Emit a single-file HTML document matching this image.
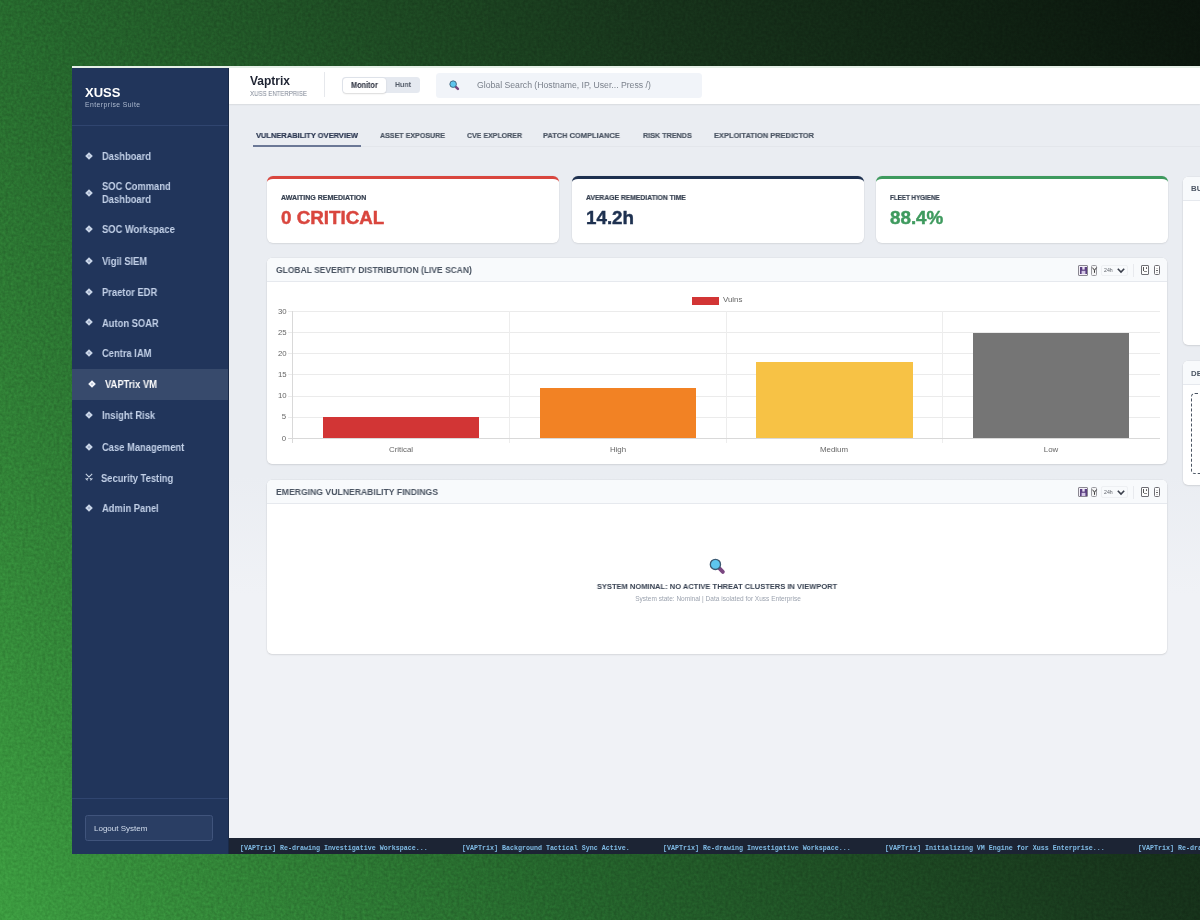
<!DOCTYPE html>
<html><head><meta charset="utf-8"><style>
*{box-sizing:border-box;margin:0;padding:0}
html,body{width:1200px;height:920px;overflow:hidden}
body{position:relative;font-family:"Liberation Sans",sans-serif;
 background:linear-gradient(60deg,#3c9c40 0%,#25662c 33%,#17341b 67%,#0a140c 100%);}
.t{position:absolute;line-height:1;white-space:nowrap;will-change:transform}
.r{position:absolute}
svg{position:absolute;overflow:visible}
</style></head><body>
<svg style="left:0;top:0" width="1200" height="920"><filter id="nz" x="0" y="0" width="100%" height="100%" color-interpolation-filters="sRGB"><feTurbulence type="fractalNoise" baseFrequency="0.35" numOctaves="2" seed="3"/><feColorMatrix values="1 0 0 0 -0.025  1 0 0 0 -0.025  1 0 0 0 -0.025  0 0 0 0 1"/></filter><rect width="1200" height="920" filter="url(#nz)" style="mix-blend-mode:overlay;opacity:.17"/></svg>
<div class="r" style="left:72.00px;top:66.00px;width:1128.00px;height:788.00px;background:linear-gradient(180deg,#eaedf2 0%,#eaedf2 52%,#f0f2f6 67%,#f0f2f6 100%)"></div>
<div class="r" style="left:72.00px;top:66.00px;width:157.00px;height:788.00px;background:#21355b"></div>
<div class="r" style="left:228.30px;top:66.00px;width:0.70px;height:788.00px;background:#1a2a48"></div>
<div class="r" style="left:72.00px;top:66.00px;width:1128.00px;height:1.50px;background:#e6f0e8"></div>
<div class="t " style="left:84.70px;top:85.90px;font-size:13px;color:#ffffff;font-weight:bold;">XUSS</div>
<div class="t " style="left:85.00px;top:102.14px;font-size:6.8px;color:#aebbd0;letter-spacing:.45px">Enterprise Suite</div>
<div class="r" style="left:72.00px;top:125.00px;width:156.30px;height:1.00px;background:#30456f"></div>
<div class="r" style="left:72.00px;top:368.90px;width:156.30px;height:30.90px;background:#374a6c"></div>
<div class="t nav" style="left:102.30px;top:152.07px;font-size:10.2px;color:#c3d1e8;font-weight:bold;transform:scaleX(0.92);transform-origin:0 0;">Dashboard</div>
<svg style="left:85.30px;top:151.80px" width="8" height="8" viewBox="0 0 8 8"><path d="M4 0.2L7.8 4L4 7.8L0.2 4Z" fill="#c9d5e8"/><path d="M4 3L5 4L4 5L3 4Z" fill="#7d8cab"/></svg>
<div class="t nav" style="left:102.30px;top:181.97px;font-size:10.2px;color:#c3d1e8;font-weight:bold;transform:scaleX(0.92);transform-origin:0 0;">SOC Command</div>
<div class="t nav" style="left:102.30px;top:194.97px;font-size:10.2px;color:#c3d1e8;font-weight:bold;transform:scaleX(0.92);transform-origin:0 0;">Dashboard</div>
<svg style="left:85.30px;top:188.70px" width="8" height="8" viewBox="0 0 8 8"><path d="M4 0.2L7.8 4L4 7.8L0.2 4Z" fill="#c9d5e8"/><path d="M4 3L5 4L4 5L3 4Z" fill="#7d8cab"/></svg>
<div class="t nav" style="left:102.30px;top:225.17px;font-size:10.2px;color:#c3d1e8;font-weight:bold;transform:scaleX(0.92);transform-origin:0 0;">SOC Workspace</div>
<svg style="left:85.30px;top:224.90px" width="8" height="8" viewBox="0 0 8 8"><path d="M4 0.2L7.8 4L4 7.8L0.2 4Z" fill="#c9d5e8"/><path d="M4 3L5 4L4 5L3 4Z" fill="#7d8cab"/></svg>
<div class="t nav" style="left:102.30px;top:256.77px;font-size:10.2px;color:#c3d1e8;font-weight:bold;transform:scaleX(0.92);transform-origin:0 0;">Vigil SIEM</div>
<svg style="left:85.30px;top:256.50px" width="8" height="8" viewBox="0 0 8 8"><path d="M4 0.2L7.8 4L4 7.8L0.2 4Z" fill="#c9d5e8"/><path d="M4 3L5 4L4 5L3 4Z" fill="#7d8cab"/></svg>
<div class="t nav" style="left:102.30px;top:288.07px;font-size:10.2px;color:#c3d1e8;font-weight:bold;transform:scaleX(0.92);transform-origin:0 0;">Praetor EDR</div>
<svg style="left:85.30px;top:287.80px" width="8" height="8" viewBox="0 0 8 8"><path d="M4 0.2L7.8 4L4 7.8L0.2 4Z" fill="#c9d5e8"/><path d="M4 3L5 4L4 5L3 4Z" fill="#7d8cab"/></svg>
<div class="t nav" style="left:102.30px;top:318.67px;font-size:10.2px;color:#c3d1e8;font-weight:bold;transform:scaleX(0.92);transform-origin:0 0;">Auton SOAR</div>
<svg style="left:85.30px;top:318.40px" width="8" height="8" viewBox="0 0 8 8"><path d="M4 0.2L7.8 4L4 7.8L0.2 4Z" fill="#c9d5e8"/><path d="M4 3L5 4L4 5L3 4Z" fill="#7d8cab"/></svg>
<div class="t nav" style="left:102.30px;top:349.37px;font-size:10.2px;color:#c3d1e8;font-weight:bold;transform:scaleX(0.92);transform-origin:0 0;">Centra IAM</div>
<svg style="left:85.30px;top:349.10px" width="8" height="8" viewBox="0 0 8 8"><path d="M4 0.2L7.8 4L4 7.8L0.2 4Z" fill="#c9d5e8"/><path d="M4 3L5 4L4 5L3 4Z" fill="#7d8cab"/></svg>
<div class="t nav" style="left:104.80px;top:380.47px;font-size:10.2px;color:#ffffff;font-weight:bold;transform:scaleX(0.92);transform-origin:0 0;">VAPTrix VM</div>
<svg style="left:88.00px;top:380.20px" width="8" height="8" viewBox="0 0 8 8"><path d="M4 0.2L7.8 4L4 7.8L0.2 4Z" fill="#f2f5fa"/><path d="M4 3L5 4L4 5L3 4Z" fill="#9aa8c2"/></svg>
<div class="t nav" style="left:102.30px;top:411.47px;font-size:10.2px;color:#c3d1e8;font-weight:bold;transform:scaleX(0.92);transform-origin:0 0;">Insight Risk</div>
<svg style="left:85.30px;top:411.20px" width="8" height="8" viewBox="0 0 8 8"><path d="M4 0.2L7.8 4L4 7.8L0.2 4Z" fill="#c9d5e8"/><path d="M4 3L5 4L4 5L3 4Z" fill="#7d8cab"/></svg>
<div class="t nav" style="left:102.30px;top:443.17px;font-size:10.2px;color:#c3d1e8;font-weight:bold;transform:scaleX(0.92);transform-origin:0 0;">Case Management</div>
<svg style="left:85.30px;top:442.90px" width="8" height="8" viewBox="0 0 8 8"><path d="M4 0.2L7.8 4L4 7.8L0.2 4Z" fill="#c9d5e8"/><path d="M4 3L5 4L4 5L3 4Z" fill="#7d8cab"/></svg>
<div class="t nav" style="left:100.70px;top:473.87px;font-size:10.2px;color:#c3d1e8;font-weight:bold;transform:scaleX(0.92);transform-origin:0 0;">Security Testing</div>
<svg style="left:84.70px;top:473.30px" width="8" height="8" viewBox="0 0 8 8"><path d="M0.8 0.8L6.6 6.6M7.2 0.8L1.4 6.6M0.6 5.4L2.6 7.4M7.4 5.4L5.4 7.4" stroke="#c5d1e3" stroke-width="1.1" fill="none"/></svg>
<div class="t nav" style="left:102.30px;top:503.77px;font-size:10.2px;color:#c3d1e8;font-weight:bold;transform:scaleX(0.92);transform-origin:0 0;">Admin Panel</div>
<svg style="left:85.30px;top:503.50px" width="8" height="8" viewBox="0 0 8 8"><path d="M4 0.2L7.8 4L4 7.8L0.2 4Z" fill="#c9d5e8"/><path d="M4 3L5 4L4 5L3 4Z" fill="#7d8cab"/></svg>
<div class="r" style="left:72.00px;top:797.50px;width:156.30px;height:1.00px;background:#30456f"></div>
<div class="r" style="left:85.30px;top:815.00px;width:127.40px;height:26.30px;background:#2a3e64;border:1px solid #40547c;border-radius:2.5px"></div>
<div class="t " style="left:94.00px;top:824.53px;font-size:8px;color:#d3deee;">Logout System</div>
<div class="r" style="left:229.00px;top:67.50px;width:971.00px;height:36.50px;background:#ffffff;box-shadow:0 .6px 1.2px rgba(0,0,0,.08)"></div>
<div class="t " style="left:250.40px;top:74.94px;font-size:12px;color:#1f2433;font-weight:bold;">Vaptrix</div>
<div class="t " style="left:250.40px;top:91.08px;font-size:6.4px;color:#7c8493;transform:scaleX(0.95);transform-origin:0 0;">XUSS ENTERPRISE</div>
<div class="r" style="left:324.00px;top:72.00px;width:1.00px;height:24.80px;background:#e6e8ec"></div>
<div class="r" style="left:342.00px;top:77.00px;width:77.60px;height:16.30px;background:#e5e9f0;border-radius:3.5px"></div>
<div class="r" style="left:342.60px;top:77.60px;width:43.70px;height:15.10px;background:#ffffff;border-radius:3px;box-shadow:0 .5px 1.5px rgba(0,0,0,.15)"></div>
<div class="t " style="left:351.30px;top:80.97px;font-size:8.3px;color:#1f2433;font-weight:bold;transform:scaleX(0.88);transform-origin:0 0;">Monitor</div>
<div class="t " style="left:395.00px;top:81.23px;font-size:8.0px;color:#535b68;font-weight:bold;transform:scaleX(0.88);transform-origin:0 0;">Hunt</div>
<div class="r" style="left:435.80px;top:73.10px;width:266.60px;height:24.70px;background:#f1f4f9;border-radius:3.5px"></div>
<svg style="left:448.80px;top:80.00px" width="10.5" height="10.5" viewBox="0 0 16 16"><path d="M10.3 10.3L13.6 13.6" stroke="#7a4680" stroke-width="3.8" stroke-linecap="round"/><circle cx="6.3" cy="6.3" r="5" fill="#5ec6ee" stroke="#3d5a72" stroke-width="1.3"/></svg>
<div class="t " style="left:476.60px;top:81.15px;font-size:8.68px;color:#7a808b;">Global Search (Hostname, IP, User... Press /)</div>
<div class="r" style="left:253.00px;top:145.60px;width:947.00px;height:0.80px;background:#e3e6eb"></div>
<div class="t " style="left:256.25px;top:132.03px;font-size:8.0px;color:#2a3650;font-weight:bold;-webkit-text-stroke:.2px #2a3650;transform:scaleX(0.935);transform-origin:0 0;">VULNERABILITY OVERVIEW</div>
<div class="t " style="left:380.00px;top:132.03px;font-size:8.0px;color:#4b5563;font-weight:bold;-webkit-text-stroke:.2px #4b5563;transform:scaleX(0.886);transform-origin:0 0;">ASSET EXPOSURE</div>
<div class="t " style="left:466.75px;top:132.03px;font-size:8.0px;color:#4b5563;font-weight:bold;-webkit-text-stroke:.2px #4b5563;transform:scaleX(0.877);transform-origin:0 0;">CVE EXPLORER</div>
<div class="t " style="left:543.25px;top:132.03px;font-size:8.0px;color:#4b5563;font-weight:bold;-webkit-text-stroke:.2px #4b5563;transform:scaleX(0.932);transform-origin:0 0;">PATCH COMPLIANCE</div>
<div class="t " style="left:642.50px;top:132.03px;font-size:8.0px;color:#4b5563;font-weight:bold;-webkit-text-stroke:.2px #4b5563;transform:scaleX(0.899);transform-origin:0 0;">RISK TRENDS</div>
<div class="t " style="left:713.75px;top:132.03px;font-size:8.0px;color:#4b5563;font-weight:bold;-webkit-text-stroke:.2px #4b5563;transform:scaleX(0.934);transform-origin:0 0;">EXPLOITATION PREDICTOR</div>
<div class="r" style="left:253.25px;top:144.80px;width:107.50px;height:2.00px;background:#6b7896"></div>
<div class="r" style="left:267.20px;top:175.80px;width:291.60px;height:67.20px;background:#fff;border-top:3px solid #d9463e;border-radius:6px;box-shadow:0 1px 2px rgba(0,0,0,.07),0 0 0 .5px rgba(0,0,0,.04)"></div>
<div class="t " style="left:281.00px;top:193.82px;font-size:7.0px;color:#374151;font-weight:bold;-webkit-text-stroke:.2px #374151;transform:scaleX(1.004);transform-origin:0 0;">AWAITING REMEDIATION</div>
<div class="t " style="left:281.00px;top:208.59px;font-size:18.8px;color:#d9463e;font-weight:bold;-webkit-text-stroke:.45px #d9463e">0 CRITICAL</div>
<div class="r" style="left:572.20px;top:175.80px;width:291.60px;height:67.20px;background:#fff;border-top:3px solid #1e3150;border-radius:6px;box-shadow:0 1px 2px rgba(0,0,0,.07),0 0 0 .5px rgba(0,0,0,.04)"></div>
<div class="t " style="left:586.00px;top:193.82px;font-size:7.0px;color:#374151;font-weight:bold;-webkit-text-stroke:.2px #374151;transform:scaleX(0.967);transform-origin:0 0;">AVERAGE REMEDIATION TIME</div>
<div class="t " style="left:586.00px;top:208.59px;font-size:18.8px;color:#1e3150;font-weight:bold;-webkit-text-stroke:.45px #1e3150">14.2h</div>
<div class="r" style="left:876.00px;top:175.80px;width:291.50px;height:67.20px;background:#fff;border-top:3px solid #3e9a5e;border-radius:6px;box-shadow:0 1px 2px rgba(0,0,0,.07),0 0 0 .5px rgba(0,0,0,.04)"></div>
<div class="t " style="left:889.80px;top:193.82px;font-size:7.0px;color:#374151;font-weight:bold;-webkit-text-stroke:.2px #374151;transform:scaleX(0.891);transform-origin:0 0;">FLEET HYGIENE</div>
<div class="t " style="left:889.80px;top:208.59px;font-size:18.8px;color:#3e9a5e;font-weight:bold;-webkit-text-stroke:.45px #3e9a5e">88.4%</div>
<div class="r" style="left:267.20px;top:257.80px;width:900.30px;height:206.20px;background:#fff;border-radius:5px;box-shadow:0 1px 2px rgba(0,0,0,.09),0 0 0 .5px rgba(0,0,0,.05)"></div>
<div class="r" style="left:267.20px;top:257.80px;width:900.30px;height:24.20px;background:#f8fafc;border-radius:5px 5px 0 0;border-bottom:1px solid #e6e9ee"></div>
<div class="t " style="left:275.60px;top:266.15px;font-size:8.8px;color:#4b5563;font-weight:bold;transform:scaleX(0.965);transform-origin:0 0;">GLOBAL SEVERITY DISTRIBUTION (LIVE SCAN)</div>
<div class="r" style="left:267.20px;top:480.00px;width:900.30px;height:173.90px;background:#fff;border-radius:5px;box-shadow:0 1px 2px rgba(0,0,0,.09),0 0 0 .5px rgba(0,0,0,.05)"></div>
<div class="r" style="left:267.20px;top:480.00px;width:900.30px;height:24.00px;background:#f8fafc;border-radius:5px 5px 0 0;border-bottom:1px solid #e6e9ee"></div>
<div class="t " style="left:275.80px;top:487.75px;font-size:8.8px;color:#4b5563;font-weight:bold;transform:scaleX(0.982);transform-origin:0 0;">EMERGING VULNERABILITY FINDINGS</div>
<div class="r" style="left:1182.60px;top:176.50px;width:117.40px;height:168.30px;background:#fff;border-radius:5px;box-shadow:0 1px 2px rgba(0,0,0,.09),0 0 0 .5px rgba(0,0,0,.05)"></div>
<div class="r" style="left:1182.60px;top:176.50px;width:117.40px;height:24.50px;background:#f8fafc;border-radius:5px 5px 0 0;border-bottom:1px solid #e6e9ee"></div>
<div class="t " style="left:1191.30px;top:185.10px;font-size:7.8px;color:#4b5563;font-weight:bold;">BUSINESS</div>
<div class="r" style="left:1182.60px;top:361.20px;width:117.40px;height:123.80px;background:#fff;border-radius:5px;box-shadow:0 1px 2px rgba(0,0,0,.09),0 0 0 .5px rgba(0,0,0,.05)"></div>
<div class="r" style="left:1182.60px;top:361.20px;width:117.40px;height:23.80px;background:#f8fafc;border-radius:5px 5px 0 0;border-bottom:1px solid #e6e9ee"></div>
<div class="t " style="left:1191.30px;top:369.90px;font-size:7.8px;color:#4b5563;font-weight:bold;">DETAILS</div>
<div class="r" style="left:1191.40px;top:393.20px;width:108.60px;height:81.30px;border:1px dashed #4b5563;border-radius:4px"></div>
<div class="r" style="left:1078.30px;top:265.00px;width:10.20px;height:10.50px;background:#f3eff8;border:1px solid #8a8790;border-radius:1px"></div>
<svg style="left:1080px;top:266.90px" width="7" height="7" viewBox="0 0 7 7"><path d="M0 0H7V7H0Z" fill="#5a3f80"/><path d="M2.3 0H4.7V2.6H2.3Z" fill="#e9e1f3"/><path d="M1.6 3.8H5.4V7H1.6Z" fill="#d4c8e6"/></svg>
<div class="r" style="left:1091.20px;top:265.00px;width:5.80px;height:10.50px;background:#f4f4f5;border:1px solid #9a9aa0;border-radius:1.5px"></div>
<svg style="left:1091.9px;top:266.70px" width="5" height="7" viewBox="0 0 5 7"><path d="M0.4 0.6L2.5 3.2L4.6 0.6M2.5 3.2V5.8" stroke="#3a3a3a" stroke-width="1" fill="none"/></svg>
<div class="r" style="left:1101.00px;top:264.50px;width:26.50px;height:11.60px;border:1px solid #eef0f3;border-radius:2px"></div>
<div class="t " style="left:1103.80px;top:267.70px;font-size:5.2px;color:#5f636b;">24h</div>
<svg style="left:1116.8px;top:268.00px" width="8" height="5" viewBox="0 0 8 5"><path d="M0.8 0.8L4 4L7.2 0.8" stroke="#3a3f4b" stroke-width="1.6" fill="none"/></svg>
<div class="r" style="left:1133.10px;top:263.80px;width:0.80px;height:13.30px;background:#e8eaee"></div>
<div class="r" style="left:1141.40px;top:264.90px;width:7.30px;height:9.90px;background:#fdfdfd;border:1px solid #6e6e74;border-radius:1px"></div>
<div class="r" style="left:1143.10px;top:267.10px;width:1.30px;height:3.80px;background:#555"></div>
<div class="r" style="left:1145.90px;top:267.00px;width:1.10px;height:1.70px;background:#555;border-radius:.5px"></div>
<div class="r" style="left:1144.00px;top:270.60px;width:2.80px;height:1.00px;background:#888"></div>
<div class="r" style="left:1153.90px;top:265.40px;width:6.10px;height:9.40px;background:#fdfdfd;border:1px solid #6e6e74;border-radius:1.5px"></div>
<div class="r" style="left:1155.60px;top:269.70px;width:2.70px;height:1.20px;background:#666"></div>
<div class="r" style="left:1155.60px;top:267.90px;width:2.70px;height:0.60px;background:#ccc"></div>
<div class="r" style="left:1155.60px;top:272.10px;width:2.70px;height:0.60px;background:#ccc"></div>
<div class="r" style="left:1078.30px;top:486.90px;width:10.20px;height:10.50px;background:#f3eff8;border:1px solid #8a8790;border-radius:1px"></div>
<svg style="left:1080px;top:488.80px" width="7" height="7" viewBox="0 0 7 7"><path d="M0 0H7V7H0Z" fill="#5a3f80"/><path d="M2.3 0H4.7V2.6H2.3Z" fill="#e9e1f3"/><path d="M1.6 3.8H5.4V7H1.6Z" fill="#d4c8e6"/></svg>
<div class="r" style="left:1091.20px;top:486.90px;width:5.80px;height:10.50px;background:#f4f4f5;border:1px solid #9a9aa0;border-radius:1.5px"></div>
<svg style="left:1091.9px;top:488.60px" width="5" height="7" viewBox="0 0 5 7"><path d="M0.4 0.6L2.5 3.2L4.6 0.6M2.5 3.2V5.8" stroke="#3a3a3a" stroke-width="1" fill="none"/></svg>
<div class="r" style="left:1101.00px;top:486.40px;width:26.50px;height:11.60px;border:1px solid #eef0f3;border-radius:2px"></div>
<div class="t " style="left:1103.80px;top:489.60px;font-size:5.2px;color:#5f636b;">24h</div>
<svg style="left:1116.8px;top:489.90px" width="8" height="5" viewBox="0 0 8 5"><path d="M0.8 0.8L4 4L7.2 0.8" stroke="#3a3f4b" stroke-width="1.6" fill="none"/></svg>
<div class="r" style="left:1133.10px;top:485.70px;width:0.80px;height:13.30px;background:#e8eaee"></div>
<div class="r" style="left:1141.40px;top:486.80px;width:7.30px;height:9.90px;background:#fdfdfd;border:1px solid #6e6e74;border-radius:1px"></div>
<div class="r" style="left:1143.10px;top:489.00px;width:1.30px;height:3.80px;background:#555"></div>
<div class="r" style="left:1145.90px;top:488.90px;width:1.10px;height:1.70px;background:#555;border-radius:.5px"></div>
<div class="r" style="left:1144.00px;top:492.50px;width:2.80px;height:1.00px;background:#888"></div>
<div class="r" style="left:1153.90px;top:487.30px;width:6.10px;height:9.40px;background:#fdfdfd;border:1px solid #6e6e74;border-radius:1.5px"></div>
<div class="r" style="left:1155.60px;top:491.60px;width:2.70px;height:1.20px;background:#666"></div>
<div class="r" style="left:1155.60px;top:489.80px;width:2.70px;height:0.60px;background:#ccc"></div>
<div class="r" style="left:1155.60px;top:494.00px;width:2.70px;height:0.60px;background:#ccc"></div>
<div class="r" style="left:287.80px;top:437.80px;width:871.90px;height:1.00px;background:#ebebeb"></div>
<div class="t " style="left:278.00px;top:434.50px;font-size:7.8px;color:#666;width:8.2px;text-align:right;left:277.9px">0</div>
<div class="r" style="left:287.80px;top:416.68px;width:871.90px;height:1.00px;background:#ebebeb"></div>
<div class="t " style="left:278.00px;top:413.38px;font-size:7.8px;color:#666;width:8.2px;text-align:right;left:277.9px">5</div>
<div class="r" style="left:287.80px;top:395.56px;width:871.90px;height:1.00px;background:#ebebeb"></div>
<div class="t " style="left:278.00px;top:392.26px;font-size:7.8px;color:#666;width:8.2px;text-align:right;left:277.9px">10</div>
<div class="r" style="left:287.80px;top:374.44px;width:871.90px;height:1.00px;background:#ebebeb"></div>
<div class="t " style="left:278.00px;top:371.14px;font-size:7.8px;color:#666;width:8.2px;text-align:right;left:277.9px">15</div>
<div class="r" style="left:287.80px;top:353.32px;width:871.90px;height:1.00px;background:#ebebeb"></div>
<div class="t " style="left:278.00px;top:350.02px;font-size:7.8px;color:#666;width:8.2px;text-align:right;left:277.9px">20</div>
<div class="r" style="left:287.80px;top:332.20px;width:871.90px;height:1.00px;background:#ebebeb"></div>
<div class="t " style="left:278.00px;top:328.90px;font-size:7.8px;color:#666;width:8.2px;text-align:right;left:277.9px">25</div>
<div class="r" style="left:287.80px;top:311.08px;width:871.90px;height:1.00px;background:#ebebeb"></div>
<div class="t " style="left:278.00px;top:307.78px;font-size:7.8px;color:#666;width:8.2px;text-align:right;left:277.9px">30</div>
<div class="r" style="left:291.90px;top:311.30px;width:1.00px;height:132.10px;background:#ededed"></div>
<div class="r" style="left:508.73px;top:311.30px;width:1.00px;height:132.10px;background:#ededed"></div>
<div class="r" style="left:725.55px;top:311.30px;width:1.00px;height:132.10px;background:#ededed"></div>
<div class="r" style="left:942.38px;top:311.30px;width:1.00px;height:132.10px;background:#ededed"></div>
<div class="r" style="left:291.90px;top:311.30px;width:1.00px;height:132.10px;background:#d9d9d9"></div>
<div class="r" style="left:287.80px;top:437.80px;width:871.90px;height:1.00px;background:#d9d9d9"></div>
<div class="r" style="left:322.76px;top:417.18px;width:156.11px;height:21.12px;background:#d23535"></div>
<div class="t" style="left:100.81px;width:600px;text-align:center;top:445.91px;font-size:7.9px;color:#666;">Critical</div>
<div class="r" style="left:539.58px;top:387.61px;width:156.11px;height:50.69px;background:#f28224"></div>
<div class="t" style="left:317.64px;width:600px;text-align:center;top:445.91px;font-size:7.9px;color:#666;">High</div>
<div class="r" style="left:756.41px;top:362.27px;width:156.11px;height:76.03px;background:#f7c245"></div>
<div class="t" style="left:534.46px;width:600px;text-align:center;top:445.91px;font-size:7.9px;color:#666;">Medium</div>
<div class="r" style="left:973.23px;top:332.70px;width:156.11px;height:105.60px;background:#757575"></div>
<div class="t" style="left:751.29px;width:600px;text-align:center;top:445.91px;font-size:7.9px;color:#666;">Low</div>
<div class="r" style="left:692.30px;top:297.00px;width:26.70px;height:8.00px;background:#d23535"></div>
<div class="t " style="left:722.70px;top:296.11px;font-size:7.9px;color:#666;">Vulns</div>
<svg style="left:709.40px;top:558.00px" width="16.3" height="16.3" viewBox="0 0 16 16"><path d="M10.3 10.3L13.6 13.6" stroke="#7a4680" stroke-width="3.8" stroke-linecap="round"/><circle cx="6.3" cy="6.3" r="5" fill="#5ec6ee" stroke="#3d5a72" stroke-width="1.3"/></svg>
<div class="t" style="left:417.25px;width:600px;text-align:center;top:583.21px;font-size:7.9px;color:#374151;font-weight:bold;transform:scaleX(0.955);transform-origin:50% 0;">SYSTEM NOMINAL: NO ACTIVE THREAT CLUSTERS IN VIEWPORT</div>
<div class="t" style="left:417.60px;width:600px;text-align:center;top:595.97px;font-size:6.53px;color:#9ca3af;">System state: Nominal | Data isolated for Xuss Enterprise</div>
<div class="r" style="left:229.00px;top:837.80px;width:971.00px;height:16.20px;background:#1c2434"></div>
<div class="t " style="left:240.00px;top:844.65px;font-size:6.67px;color:#80bce6;font-weight:bold;font-family:'Liberation Mono',monospace">[VAPTrix] Re-drawing Investigative Workspace...</div>
<div class="t " style="left:461.59px;top:844.65px;font-size:6.67px;color:#80bce6;font-weight:bold;font-family:'Liberation Mono',monospace">[VAPTrix] Background Tactical Sync Active.</div>
<div class="t " style="left:663.18px;top:844.65px;font-size:6.67px;color:#80bce6;font-weight:bold;font-family:'Liberation Mono',monospace">[VAPTrix] Re-drawing Investigative Workspace...</div>
<div class="t " style="left:884.77px;top:844.65px;font-size:6.67px;color:#80bce6;font-weight:bold;font-family:'Liberation Mono',monospace">[VAPTrix] Initializing VM Engine for Xuss Enterprise...</div>
<div class="t " style="left:1138.38px;top:844.65px;font-size:6.67px;color:#80bce6;font-weight:bold;font-family:'Liberation Mono',monospace">[VAPTrix] Re-drawing Investigative Workspace...</div>
</body></html>
